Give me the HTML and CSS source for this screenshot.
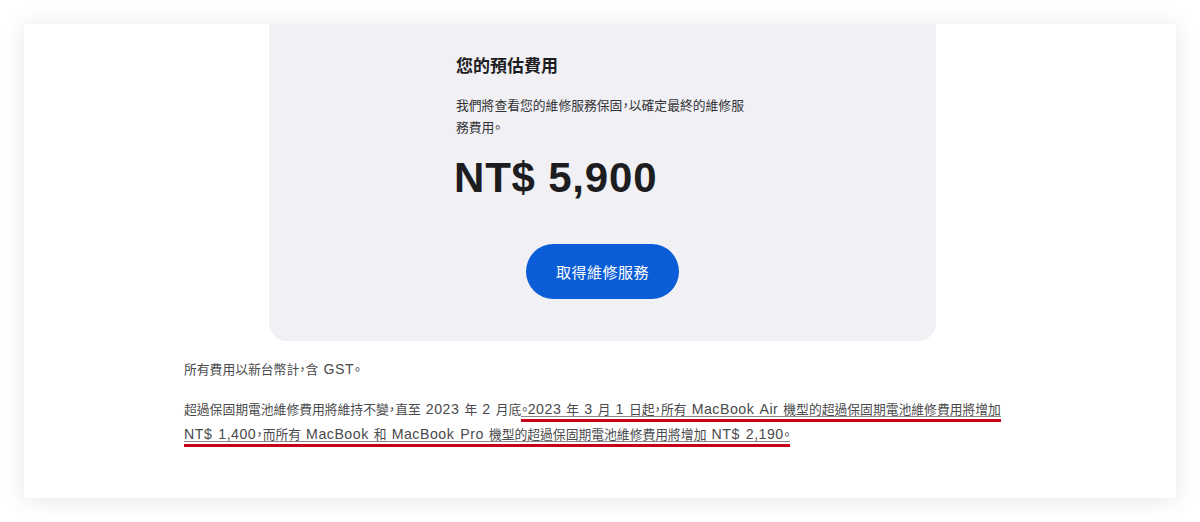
FILE: index.html
```html
<!DOCTYPE html>
<html lang="zh-Hant">
<head>
<meta charset="utf-8">
<link rel="stylesheet" href="styles.css">
</head>
<body>
<div class="panel">
  <section class="card">
    <div class="card-inner">
      <h2 class="title">您的預估費用</h2>
      <p class="desc">我們將查看您的維修服務保固，以確定最終的維修服務費用。</p>
      <div class="price">NT$ 5,900</div>
    </div>
    <div class="btn-row"><a class="btn">取得維修服務</a></div>
  </section>
  <div class="notes">
    <p class="note">所有費用以新台幣計，含 <span class="en">GST</span>。</p>
    <p class="note">超過保固期電池維修費用將維持不變，直至 <span class="en">2023</span> 年 <span class="en">2</span> 月底<span class="mark">。<span class="en">2023</span> 年 <span class="en">3</span> 月 <span class="en">1</span> 日起，所有 <span class="en">MacBook Air</span> 機型的超過保固期電池維修費用將增加 <span class="en">NT$ 1,400</span>，而所有 <span class="en">MacBook</span> 和 <span class="en">MacBook Pro</span> 機型的超過保固期電池維修費用將增加 <span class="en">NT$ 2,190</span>。</span></p>
  </div>
</div>
</body>
</html>
```
FILE: styles.css
```css
html, body {
  margin: 0;
  padding: 0;
  background: #ffffff;
}
body {
  padding: 24px;
  font-family: "Liberation Sans", "Noto Sans CJK TC", sans-serif;
}
.panel {
  background: #ffffff;
  box-shadow: 0 2px 22px rgba(0, 0, 0, 0.10);
  height: 474px;
  box-sizing: border-box;
}
.card {
  width: 667px;
  margin: 0 238px 0 245px;
  background: #f0f0f5;
  border-radius: 0 0 18px 18px;
  padding: 31px 0 42px;
  box-sizing: border-box;
}
.card-inner {
  width: 294px;
  margin-left: 187px;
}
.title {
  margin: 0;
  font-size: 17px;
  line-height: 24px;
  font-weight: 700;
  color: #1d1d1f;
}
.desc {
  margin: 16px 0 0;
  font-size: 12.8px;
  line-height: 22px;
  color: #333336;
  font-feature-settings: "halt";
}
.price {
  margin-top: 14px;
  margin-left: -2px;
  font-size: 42px;
  line-height: 50px;
  font-weight: 700;
  color: #1d1d1f;
  letter-spacing: 0.8px;
}
.btn-row {
  display: flex;
  justify-content: center;
  margin-top: 41px;
}
.btn {
  display: flex;
  align-items: center;
  justify-content: center;
  width: 153px;
  height: 55px;
  border-radius: 28px;
  background: #0a5dd6;
  color: #ffffff;
  font-size: 15px;
  letter-spacing: 0.5px;
}
.notes {
  width: 832px;
  margin: 16px auto 0;
}
.note {
  margin: 0 0 15px;
  font-size: 12.8px;
  line-height: 25px;
  color: #4a4a4c;
  font-feature-settings: "halt";
  word-spacing: 1.5px;
}
.en {
  font-size: 14.2px;
  letter-spacing: 0.5px;
}
.mark {
  padding-bottom: 5px;
  background-image:
    linear-gradient(#c8001a, #c8001a),
    linear-gradient(#8a8a8e, #8a8a8e);
  background-repeat: repeat-x, repeat-x;
  background-size: 3px 3px, 1px 1px;
  background-position: 0 100%, 0 calc(100% - 5px);
}
```
